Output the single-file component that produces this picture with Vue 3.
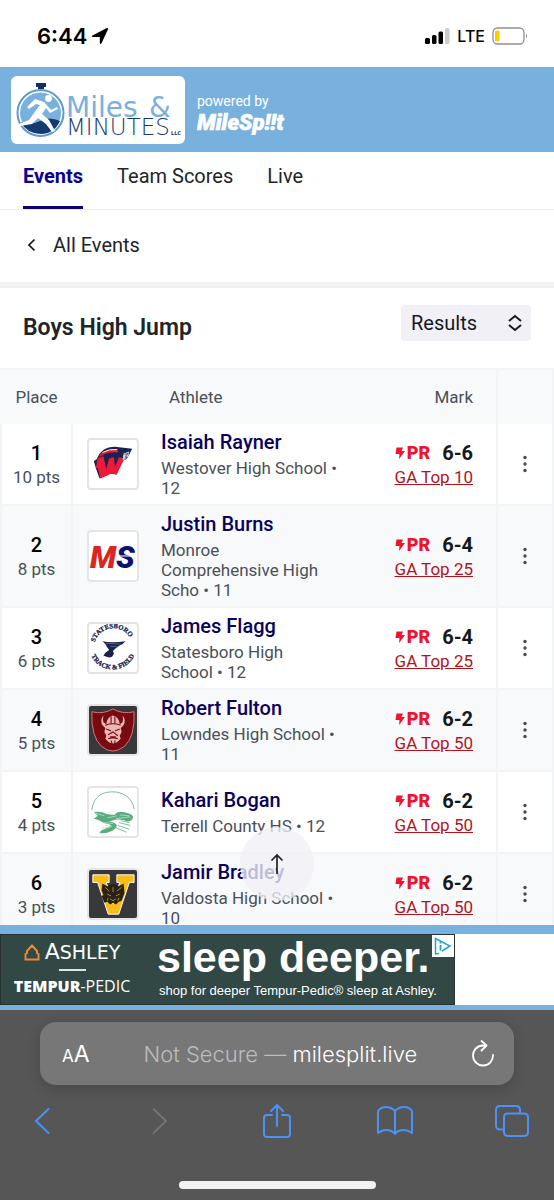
<script setup>
import { ref } from 'vue'

const tabs = ['Events', 'Team Scores', 'Live']
const activeTab = ref('Events')
const view = ref('Results')

const results = [
  { place: 1, points: 10, athlete: 'Isaiah Rayner', school: 'Westover High School', grade: 12, mark: '6-6', rank: 'GA Top 10', logo: 'westover' },
  { place: 2, points: 8, athlete: 'Justin Burns', school: 'Monroe Comprehensive High Scho', grade: 11, mark: '6-4', rank: 'GA Top 25', logo: 'monroe' },
  { place: 3, points: 6, athlete: 'James Flagg', school: 'Statesboro High School', grade: 12, mark: '6-4', rank: 'GA Top 25', logo: 'statesboro' },
  { place: 4, points: 5, athlete: 'Robert Fulton', school: 'Lowndes High School', grade: 11, mark: '6-2', rank: 'GA Top 50', logo: 'lowndes' },
  { place: 5, points: 4, athlete: 'Kahari Bogan', school: 'Terrell County HS', grade: 12, mark: '6-2', rank: 'GA Top 50', logo: 'terrell' },
  { place: 6, points: 3, athlete: 'Jamir Bradley', school: 'Valdosta High School', grade: 10, mark: '6-2', rank: 'GA Top 50', logo: 'valdosta' },
]
</script>

<template>
  <div class="screen">
    <div class="status">
      <div class="clock">
        <span>6:44</span>
        <svg width="18" height="18" viewBox="0 0 18 18" aria-hidden="true"><path d="M1 8.800 15.800 1q1.600-.5 1.200 1.200L10.400 16.600q-1.300 1.200-1.600-.6V9.900H1.800Q.1 9.900 1 8.800Z" fill="#000" /></svg>
      </div>
      <div class="signal">
        <svg width="26" height="18" viewBox="0 0 26 18" aria-hidden="true">
          <rect x="1" y="11" width="5" height="6" rx="1.5" />
          <rect x="8" y="8" width="4.500" height="9" rx="1.5" />
          <rect x="14.500" y="4.500" width="4.500" height="12.500" rx="1.5" />
          <rect x="21" y="1" width="4.500" height="16" rx="1.5" fill="#ccc" />
        </svg>
        <span>LTE</span>
        <svg width="36" height="18" viewBox="0 0 36 18" aria-hidden="true">
          <rect x="1" y="1" width="31" height="16" rx="4.5" fill="none" stroke="#909090" stroke-width="1.3" />
          <rect x="3" y="3.5" width="4.500" height="11" rx="1.5" fill="#fc0" />
          <path d="M34 6.500q2 2.500 0 5Z" fill="#888" />
        </svg>
      </div>
    </div>

    <header class="brand">
      <a class="host" href="#" aria-label="Miles and Minutes LLC">
        <svg width="174" height="68" viewBox="0 0 174 68">
          <path d="M25 7h10v4h-2v2h-6v-2h-2z" fill="#132f61" />
          <circle cx="29.500" cy="37" r="23" fill="#fff" stroke="#5e9bcc" stroke-width="2" />
          <circle cx="29.500" cy="37" r="20.500" fill="#79b1de" />
          <path d="M10 46q9 4 19-1t20 0Q43 58 29.500 58 15 57 10 46Z" fill="#173a70" />
          <circle cx="37.500" cy="22.500" r="3.400" fill="#fff" />
          <path d="m33 26-9-3-8 8 2 2 7-5 4 1-6 8-5 7-10 4 1 2 12-2 6-6 8 6 6 8 3-1-6-11-7-6 4-6 4 5 8-4-1-2-6 3z" fill="#fff" />
          <text x="55" y="41" class="host-top">Miles</text>
          <text x="138" y="41" class="host-top">&amp;</text>
          <text x="55" y="59" class="host-bottom">MINUTES</text>
          <text x="160" y="59" class="host-llc">LLC</text>
        </svg>
      </a>
      <div class="powered">
        <span>powered by</span>
        <svg width="92" height="26" viewBox="0 0 92 26" role="img" aria-label="MileSplit">
          <text x="0" y="21" class="milesplit">MileSp!!t</text>
        </svg>
      </div>
    </header>

    <div class="page">
      <div class="scroller">
        <nav class="tabs">
          <a v-for="tab in tabs" :key="tab" href="#" :class="{ active: tab === activeTab }" @click.prevent="activeTab = tab">{{ tab }}</a>
        </nav>
        <a class="back" href="#">
          <svg width="10" height="14" viewBox="0 0 10 14" aria-hidden="true"><path d="M7.500 1.500 2 7l5.500 5.500" fill="none" stroke="#111" stroke-width="1.700" /></svg>
          <span>All Events</span>
        </a>
        <div class="title">
          <h1>Boys High Jump</h1>
          <div class="picker">
            <select v-model="view" aria-label="View">
              <option>Results</option>
            </select>
            <svg width="16" height="18" viewBox="0 0 16 18" aria-hidden="true"><path d="m2 7 6-5 6 5M2 11l6 5 6-5" fill="none" stroke="#16181c" stroke-width="1.900" /></svg>
          </div>
        </div>

        <table>
          <colgroup>
            <col class="col-place" />
            <col class="col-logo" />
            <col />
            <col class="col-mark" />
            <col class="col-menu" />
          </colgroup>
          <thead>
            <tr>
              <th class="place">Place</th>
              <th></th>
              <th class="athlete">Athlete</th>
              <th class="mark">Mark</th>
              <th class="menu"></th>
            </tr>
          </thead>
          <tbody>
            <tr v-for="r in results" :key="r.place">
              <td class="place">
                <strong>{{ r.place }}</strong>
                <span>{{ r.points }} pts</span>
              </td>
              <td class="logo">
                <svg v-if="r.logo === 'westover'" class="badge" viewBox="0 0 50 50">
                  <path d="M8 20Q13 7 27 7l18 2-3 6-3 5-5 2-6 14-6-1-4 1-7 4-4-11-2-7Z" fill="#18234f" />
                  <path d="M9 19l6-2 3 13 3-11 5-1 1 10 4-10 6 1-8 17-6-1-4 2-7 3-3-11-2 1Z" fill="#ef1838" />
                  <path d="M11 16q6-7 19-7v4q-12-1-19 5Z" fill="#ef1838" />
                  <path d="M14 13q7-4 15-3" stroke="#fff" fill="none" />
                  <path d="m36 14 6-2-1 5-3 3-3 1Z" fill="#d8dde2" />
                  <path d="m37 15 4-1-3 3 2 1-3 1" stroke="#18234f" stroke-width=".7" fill="none" />
                </svg>
                <svg v-else-if="r.logo === 'monroe'" class="badge" viewBox="0 0 50 50">
                  <text x="1" y="37" class="monogram"><tspan class="red">M</tspan><tspan class="navy">S</tspan></text>
                  <path d="M30 25h17" stroke="#fff" stroke-width="1.200" />
                </svg>
                <svg v-else-if="r.logo === 'statesboro'" class="badge" viewBox="0 0 50 50">
                  <path id="arc-top" d="M6 19A20 20 0 0 1 45 21" fill="none" />
                  <path id="arc-bottom" d="M2.500 33A24.500 24.500 0 0 0 47.500 32" fill="none" />
                  <text class="seal"><textPath href="#arc-top">STATESBORO</textPath></text>
                  <text class="seal"><textPath href="#arc-bottom">TRACK &amp; FIELD</textPath></text>
                  <path d="M14 18q10 2 24 0-3 4-7 5l-4 3-2 2 1 3-2 3-3 1-6-2 2-3 4-3-3-4q0-2-4-5Z" fill="#18234f" />
                  <path d="m18 20 15 1m-11 2 8 1" stroke="#8290b8" stroke-width=".6" fill="none" />
                </svg>
                <svg v-else-if="r.logo === 'lowndes'" class="badge dark" viewBox="0 0 50 50">
                  <path d="M25 3q10 6 22 3 1 26-10 36-7 5-12 5-6 0-12-5Q2 32 3 6q12 3 22-3Z" fill="#780b12" stroke="#d8767d" />
                  <path d="M18 19q1-8 7-9 6 1 7 9l3-2q1-3 0-7 4 5 1 10l-3 3 1 4-2 4 1 3-4 4-4 1-4-1-4-4 1-3-2-4 1-4-3-3q-3-5 1-10-1 4 0 7Z" fill="#e8b8b6" />
                  <path d="M17 20q8-3 16 0M23 11v7m4-7v7M18 24l5 2m4 0 5-2M20 30l5-3 5 4m-8 1h6M20 34l5-1 5 1m-7 2 1 3m3-3v3" stroke="#780b12" stroke-width="1.200" fill="none" />
                </svg>
                <svg v-else-if="r.logo === 'terrell'" class="badge" viewBox="0 0 50 50">
                  <path d="M3 23C5 7 16 4 25 4s20 5 22 18" fill="none" stroke="#75b994" />
                  <path d="M5 25q8-1 13 2l8 1q4-4 9-3 9 1 11 5-1 5-6 5-5-3-13-2l-6 2q7 1 8 4-2 5-6 6-5 3-12 2 1-3 5-4l7-4q-2-2-6-2l-8-4-4-1 4-3Z" fill="#58ad7e" />
                  <path d="m6 26 10 3m3 2 10-2m-1 3 15-2M16 36l9 1m-12 5 9-1m-5-2 7 1M32 28l10 1" stroke="#c1e2cc" stroke-width=".8" fill="none" />
                  <path d="m31 36 12 3M30 39l12 4m-15-2 12 5M33 34l9 2" stroke="#58ad7e" stroke-width=".8" fill="none" />
                </svg>
                <svg v-else class="badge dark" viewBox="0 0 50 50">
                  <path d="M4 5h17v8h-3l7 22 7-22h-3V5h18v8h-5L31 46H20L9 13H4Z" fill="#f9bd16" stroke="#fff" />
                  <path d="m14 14 5 3 6-3 6 3 5-3 1 10-3 8-3 1-3 3-3-2-3 2-3-3-3 1-3-7 2-1-2-5Z" fill="#292217" />
                  <path d="m17 18 4 4m4-4v5m4-1 5-4m-15 7 4 2m5 0 4-2m-10 5 3 2 3-2m-9 2 1-3m11 0-1 3" stroke="#c89a18" stroke-width=".9" fill="none" />
                </svg>
              </td>
              <td class="athlete">
                <a href="#">{{ r.athlete }}</a>
                <p>{{ r.school }} • {{ r.grade }}</p>
              </td>
              <td class="mark">
                <div class="result">
                  <svg width="10" height="14" viewBox="0 0 10 14" aria-hidden="true"><path d="M1.500 1.500h6.500L6.500 5H10L4 13l.5-5H.5Z" fill="#f0132e" /></svg>
                  <span class="pr">PR</span>
                  <strong>{{ r.mark }}</strong>
                </div>
                <a href="#">{{ r.rank }}</a>
              </td>
              <td class="menu">
                <button type="button" :aria-label="'Options for ' + r.athlete">
                  <svg width="4" height="18" viewBox="0 0 4 18"><circle cx="2" cy="2.500" r="1.700" /><circle cx="2" cy="9" r="1.700" /><circle cx="2" cy="15.500" r="1.700" /></svg>
                </button>
              </td>
            </tr>
          </tbody>
        </table>
      </div>
      <button class="to-top" type="button" aria-label="Back to top">
        <svg width="14" height="22" viewBox="0 0 14 22"><path d="M7 21V2M1.500 7.500 7 2l5.500 5.500" fill="none" stroke="#222" stroke-width="1.700" /></svg>
      </button>
    </div>

    <aside class="ad-strip">
      <a class="ad" href="#">
        <span class="ad-brands">
          <span class="ashley">
            <svg width="16" height="17" viewBox="0 0 16 17" aria-hidden="true"><path d="m3 7 5-5.500L13 7v2l1.500 1v5.500h-13V10L3 9Z" fill="none" stroke="#e58a35" stroke-width="2" /></svg>
            <span><span class="initial">A</span>SHLEY</span>
          </span>
          <span class="rule"></span>
          <span class="tempur"><b>TEMPUR</b>-PEDIC</span>
        </span>
        <span class="ad-copy">
          <strong>sleep deeper.</strong>
          <span>shop for deeper Tempur-Pedic® sleep at Ashley.</span>
        </span>
        <svg class="choices" width="22" height="22" viewBox="0 0 22 22" aria-hidden="true">
          <path d="M0 0h22v22H0z" fill="#fff" />
          <path d="M7 18.500 3.500 19V3.500L18 11l-8 5" fill="none" stroke="#20a5c9" stroke-width="1.500" />
          <path d="M8.500 10v5.500M8.500 6.500v2" stroke="#20a5c9" stroke-width="1.800" />
        </svg>
      </a>
    </aside>

    <footer class="browser">
      <div class="address">
        <button type="button" class="reader" aria-label="Page settings"><small>A</small>A</button>
        <p>Not Secure — <span>milesplit.live</span></p>
        <button type="button" aria-label="Reload">
          <svg width="24" height="28" viewBox="0 0 24 28"><path d="M15 5.500h-3a10 10 0 1 0 10 9.500M10.500 1l5 4.500-5 5" fill="none" stroke="#fff" stroke-width="1.800" stroke-linecap="round" stroke-linejoin="round" /></svg>
        </button>
      </div>
      <div class="tools">
        <button type="button" aria-label="Back"><svg width="16" height="28" viewBox="0 0 16 28"><path d="M14.500 2 2 14l12.500 12" /></svg></button>
        <button type="button" aria-label="Forward" class="off"><svg width="16" height="28" viewBox="0 0 16 28"><path d="m1.500 2 12.500 12L1.500 26" /></svg></button>
        <button type="button" aria-label="Share"><svg width="28" height="36" viewBox="0 0 28 36"><path d="M9 12H4q-3 0-3 3v16q0 3 3 3h20q3 0 3-3V15q0-3-3-3h-5M14 23V2M8 8l6-6 6 6" /></svg></button>
        <button type="button" aria-label="Bookmarks"><svg width="36" height="30" viewBox="0 0 36 30"><path d="M18 28V5Q14 1 9 1 4 1 1 5v22q4-3 8-3 6 0 9 4 3-4 9-4 4 0 8 3V5q-3-4-8-4-5 0-9 4" /></svg></button>
        <button type="button" aria-label="Tabs"><svg width="34" height="32" viewBox="0 0 34 32"><path d="M9 24.500H5q-4 0-4-4V5q0-4 4-4h16q4 0 4 4v3.500M13 8.500h16q4 0 4 4V27q0 4-4 4H13q-4 0-4-4V12.500q0-4 4-4Z" /></svg></button>
      </div>
      <div class="home"></div>
    </footer>
  </div>
</template>

<style>
body {
  margin: 0;
}
</style>

<style scoped>
* {
  box-sizing: border-box;
}

.screen {
  display: flex;
  flex-direction: column;
  height: 100vh;
  background: #fff;
  color: #212529;
  font-family: Roboto, "Noto Sans", sans-serif;
}

a {
  color: inherit;
  text-decoration: none;
}

button {
  display: flex;
  align-items: center;
  justify-content: center;
  padding: 0;
  border: 0;
  background: none;
  cursor: pointer;
}

svg {
  display: block;
  flex: none;
}

.status {
  display: flex;
  justify-content: space-between;
  height: 67px;
  padding: 22px 26px 17px 37px;
  color: #000;
  font-family: Inter, sans-serif;
}

.clock,
.signal {
  display: flex;
  align-items: center;
}

.clock {
  gap: 4px;
  font-size: 22px;
  font-weight: 600;
}

.signal {
  gap: 7px;
  font-size: 16px;
  font-weight: 500;
}

.brand {
  display: flex;
  align-items: center;
  gap: 12px;
  height: 85px;
  padding: 0 11px;
  background: #79b1de;
}

.host {
  border-radius: 6px;
  background: #fff;
}

.host-top {
  fill: #79b1de;
  font: 28px "DejaVu Sans", sans-serif;
}

.host-bottom {
  fill: #173a70;
  font: 200 23px "DejaVu Sans", sans-serif;
}

.host-llc {
  fill: #173a70;
  font: 700 5px "DejaVu Sans", sans-serif;
}

.powered {
  display: flex;
  flex-direction: column;
  margin-top: 8px;
  color: #fff;
  font-size: 14px;
  line-height: 16px;
}

.milesplit {
  fill: #fff;
  stroke: #fff;
  stroke-width: 0.6px;
  font: italic 900 22px Roboto, sans-serif;
}

.page {
  position: relative;
  flex: 1;
  min-height: 0;
}

.scroller {
  height: 100%;
  overflow-y: auto;
  scrollbar-width: none;
}

.tabs {
  display: flex;
  gap: 34px;
  height: 58px;
  padding: 0 23px;
  border-bottom: 1px solid #ececee;
  font-size: 20px;
  line-height: 48px;
}

.tabs .active {
  border-bottom: 3px solid #0b0078;
  color: #0b0090;
  font-weight: 700;
}

.back {
  display: flex;
  align-items: center;
  gap: 16px;
  height: 78px;
  padding: 0 27px 2px;
  border-bottom: 6px solid #f2f2f2;
  font-size: 20px;
}

.title {
  display: flex;
  align-items: flex-start;
  justify-content: space-between;
  height: 80px;
  padding: 17px 23px;
}

h1 {
  margin: 0;
  font-size: 23px;
  font-weight: 600;
  line-height: 46px;
}

.picker {
  position: relative;
}

.picker select {
  width: 130px;
  height: 36px;
  padding: 0 10px;
  border: 0;
  border-radius: 4px;
  appearance: none;
  background: #f0f0f6;
  color: #16181c;
  font: 20px Roboto, sans-serif;
}

.picker svg {
  position: absolute;
  top: 9px;
  right: 8px;
  pointer-events: none;
}

table {
  width: 100%;
  border-collapse: separate;
  border-spacing: 0;
  table-layout: fixed;
}

.col-place,
.col-logo {
  width: 73px;
}

.col-mark {
  width: 141px;
}

.col-menu {
  width: 58px;
}

th {
  height: 56px;
  padding: 0;
  border-top: 2px solid #f3f4f6;
  background: #f8f9fb;
  color: #495057;
  font-size: 17px;
  font-weight: 400;
}

td {
  height: 82px;
  padding: 0;
  border-bottom: 2px solid #f3f4f6;
}

tbody tr:nth-child(even) td {
  background: #f8f9fb;
}

td.place {
  padding-top: 2px;
  border-right: 2px solid #f3f4f6;
  border-left: 2px solid #f3f4f6;
  color: #495057;
  font-size: 17px;
  line-height: 24px;
  text-align: center;
}

.place strong {
  display: block;
  color: #000;
  font-size: 20px;
  font-weight: 500;
}

.badge {
  width: 52px;
  height: 52px;
  margin-left: 14px;
  border: 2px solid #e4e5e7;
  border-radius: 4px;
  background: #fff;
}

.badge.dark {
  background: #38383a;
}

.monogram {
  font: italic 900 32px Roboto, sans-serif;
}

.red {
  fill: #dc251e;
}

.navy {
  fill: #10106e;
}

.seal {
  fill: #18234f;
  stroke: #18234f;
  stroke-width: 0.3px;
  font: 700 7px "Liberation Serif", serif;
}

th.athlete {
  padding-left: 23px;
  text-align: left;
}

td.athlete {
  padding: 6px 17px 6px 15px;
}

.athlete a {
  display: block;
  color: #0b005e;
  font-size: 20px;
  font-weight: 500;
  line-height: 24px;
}

.athlete p {
  margin: 4px 0 0;
  color: #495057;
  font-size: 17px;
  line-height: 20px;
}

.mark {
  padding-right: 23px;
  text-align: right;
}

td.mark {
  padding-top: 2px;
}

.result {
  display: flex;
  align-items: center;
  justify-content: flex-end;
  line-height: 24px;
}

.pr {
  margin: 0 12px 0 2px;
  color: #f0132e;
  font-size: 18px;
  font-weight: 900;
}

.result strong {
  color: #16181c;
  font-size: 20px;
  font-weight: 700;
}

.mark a {
  color: #b3141c;
  font-size: 17px;
  line-height: 24px;
  text-decoration: underline;
}

.menu {
  border-right: 2px solid #f3f4f6;
  border-left: 2px solid #f3f4f6;
}

.menu button {
  width: 100%;
  height: 44px;
}

.menu svg {
  fill: #4a4a4c;
}

.to-top {
  position: absolute;
  bottom: 24px;
  left: 50%;
  width: 74px;
  height: 74px;
  margin-left: -37px;
  border-radius: 50%;
  background: rgba(240, 240, 246, 0.78);
}

.ad-strip {
  padding: 9px 0 5px;
  background: linear-gradient(#79b1de, #79b1de) top / 100% 9px no-repeat, linear-gradient(#79b1de, #79b1de) bottom / 100% 5px no-repeat, #fff;
}

.ad {
  position: relative;
  display: flex;
  width: 455px;
  height: 71px;
  border: 1px solid #26332f;
  background: #324844;
  color: #fff;
}

.ad-brands {
  display: flex;
  flex-direction: column;
  align-items: center;
  width: 142px;
  padding-top: 5px;
}

.ashley {
  display: flex;
  align-items: center;
  gap: 5px;
  font: 19px/24px "DejaVu Sans", sans-serif;
}

.initial {
  font-size: 22px;
}

.rule {
  width: 27px;
  height: 2px;
  margin: 5px 0;
  background: #dfe5e3;
}

.tempur {
  font: 16px/20px "Open Sans", sans-serif;
}

.tempur b {
  font-weight: 800;
}

.ad-copy {
  display: flex;
  flex-direction: column;
  padding-left: 14px;
  font-family: "Liberation Sans", sans-serif;
  white-space: nowrap;
}

.ad-copy strong {
  font-size: 43px;
  line-height: 44px;
}

.ad-copy span {
  padding-left: 2px;
  font-size: 13px;
  line-height: 24px;
}

.choices {
  position: absolute;
  top: 0;
  right: 0;
}

.browser {
  height: 190px;
  padding: 12px 0 11px;
  background: #565656;
  color: #fff;
  font-family: Inter, sans-serif;
}

.address {
  display: flex;
  align-items: center;
  justify-content: space-between;
  height: 63px;
  margin: 0 40px;
  padding: 0 19px 0 22px;
  border-radius: 16px;
  background: #777;
  box-shadow: 0 4px 14px rgba(0, 0, 0, 0.15);
}

.address p {
  margin: 0;
  color: #bcbcbe;
  font-size: 22px;
  font-weight: 300;
}

.address p span {
  color: #fff;
}

.reader {
  align-items: baseline;
  color: #fff;
  font: 23px Inter, sans-serif;
}

.reader small {
  font-size: 17px;
}

.tools {
  display: flex;
  justify-content: space-between;
  height: 72px;
  padding: 0 20px;
}

.tools button {
  width: 44px;
}

.tools path {
  fill: none;
  stroke: #4b91f7;
  stroke-width: 2;
  stroke-linecap: round;
  stroke-linejoin: round;
}

.tools .off path {
  stroke: #737373;
}

.home {
  width: 197px;
  height: 8px;
  margin: 24px auto 0;
  border-radius: 4px;
  background: #f2f2f2;
}
</style>
